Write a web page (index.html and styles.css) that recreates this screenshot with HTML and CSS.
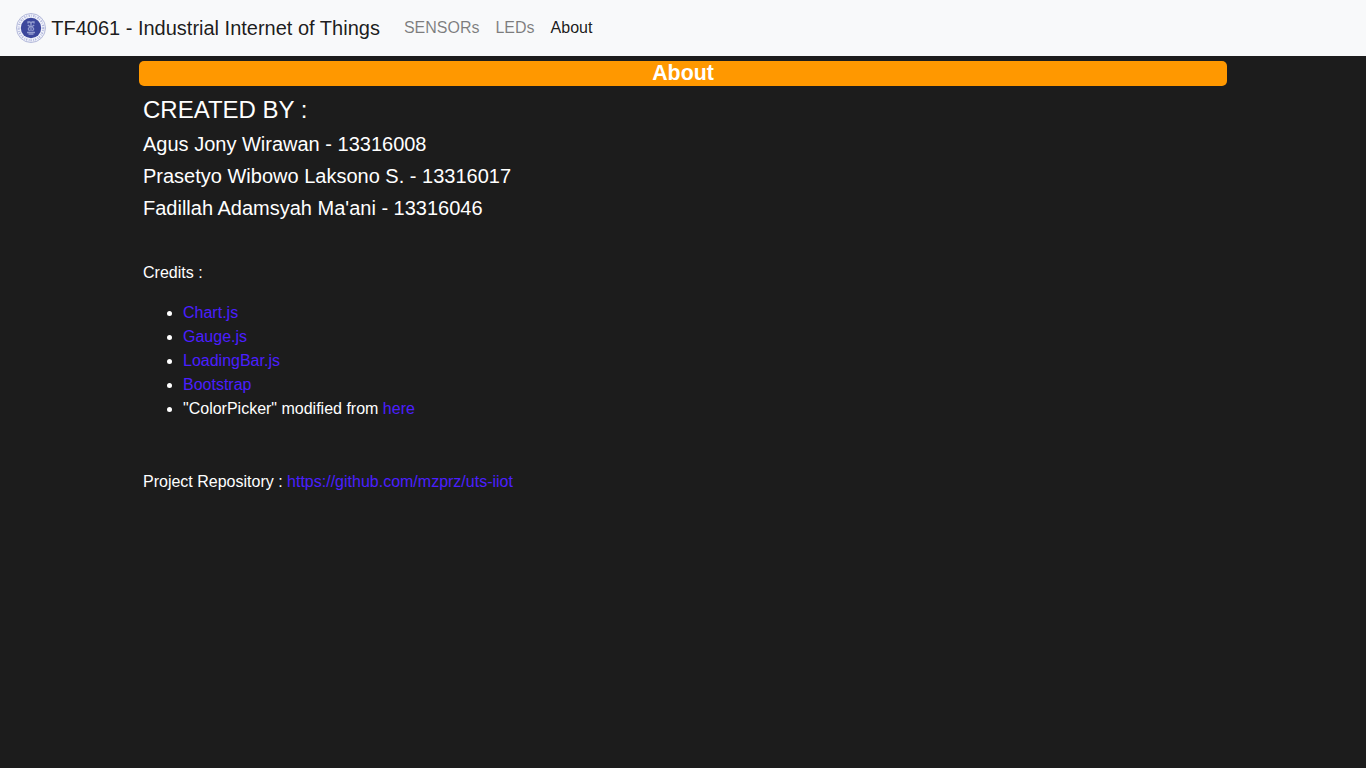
FILE: index.html
```html
<!DOCTYPE html>
<html lang="en">
<head>
<meta charset="utf-8">
<title>About</title>
<link rel="stylesheet" href="styles.css">
</head>
<body>
<nav class="navbar">
  <a class="brand" href="#">
    <svg class="logo" viewBox="0 0 30 30" width="30" height="30" aria-hidden="true">
      <circle cx="15" cy="15" r="14.5" fill="#f1f3fb" stroke="#a3aad0" stroke-width=".8"/>
      <circle cx="15" cy="15" r="12.3" fill="none" stroke="#b3b9dc" stroke-width="2.200" stroke-dasharray="1.300 1 .8 1.500"/>
      <circle cx="15" cy="15" r="10.200" fill="#3c479c"/>
      <path d="M12 10.500v-1.500h2l1 1.500 1-1.500h2v1.500M15 10v8M11.800 12l2 1.500-1.500 2.500 1.200 2M18.200 12l-2 1.500 1.500 2.500-1.200 2M11 19.500h8M12.500 21.200h5" fill="none" stroke="#959ed0" stroke-width="1.300"/>
    </svg>
    TF4061 - Industrial Internet of Things
  </a>
  <div class="links">
    <a class="nav-link" href="#">SENSORs</a>
    <a class="nav-link" href="#">LEDs</a>
    <a class="nav-link active" href="#">About</a>
  </div>
</nav>
<main class="container">
  <h1 class="title">About</h1>
  <section class="content">
    <h2 class="created">CREATED BY :</h2>
    <h3 class="author">Agus Jony Wirawan - 13316008</h3>
    <h3 class="author">Prasetyo Wibowo Laksono S. - 13316017</h3>
    <h3 class="author">Fadillah Adamsyah Ma'ani - 13316046</h3>
    <p class="credits">Credits :</p>
    <ul class="list">
      <li><a href="#">Chart.js</a></li>
      <li><a href="#">Gauge.js</a></li>
      <li><a href="#">LoadingBar.js</a></li>
      <li><a href="#">Bootstrap</a></li>
      <li>"ColorPicker" modified from <a href="#">here</a></li>
    </ul>
    <p class="repo">Project Repository : <a href="#">https://github.com/mzprz/uts-iiot</a></p>
  </section>
</main>
</body>
</html>
```
FILE: styles.css
```css
* { box-sizing: border-box; }
body {
  margin: 0;
  min-height: 100vh;
  background: #1c1c1c;
  color: #fff;
  font: 16px/24px "Liberation Sans", Arial, sans-serif;
}
a { color: #4b1fff; text-decoration: none; }
.navbar {
  display: flex;
  align-items: center;
  height: 56px;
  padding: 8px 16px;
  background: #f8f9fa;
}
.brand {
  margin-right: 16px;
  font-size: 20px;
  line-height: 30px;
  color: rgba(0, 0, 0, .9);
  white-space: nowrap;
}
.logo { vertical-align: top; }
.links { display: flex; }
.nav-link { padding: 8px; color: rgba(0, 0, 0, .5); }
.nav-link.active { color: rgba(0, 0, 0, .9); }
.container { width: 1088px; margin: 5px auto 0; }
.title {
  height: 25px;
  margin: 0;
  border-radius: 5px;
  background: #ff9800;
  font-size: 21.33px;
  font-weight: bold;
  line-height: 24px;
  text-align: center;
}
.content { padding: 9px 4px 0; }
.created { margin: 0 0 8px; font-size: 24px; font-weight: 400; line-height: 29px; }
.author { margin: 0 0 8px; font-size: 20px; font-weight: 400; line-height: 24px; }
.credits { margin: 41px 0 16px; }
.list { margin: 0; padding-left: 40px; }
.repo { margin: 49px 0 0; }
```
